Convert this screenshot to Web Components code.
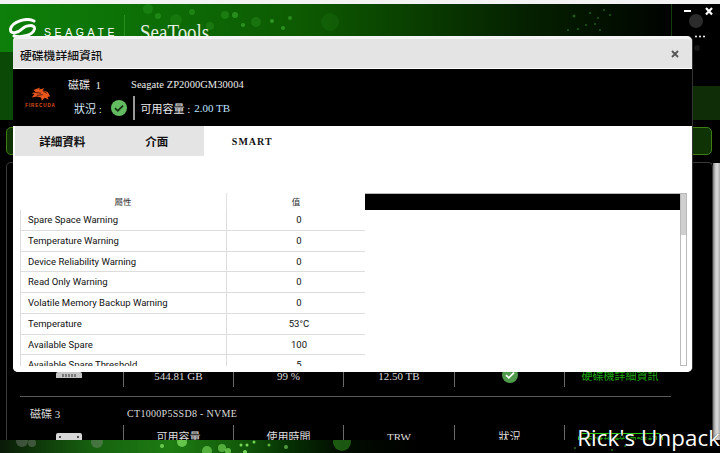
<!DOCTYPE html>
<html lang="zh-Hant"><head><meta charset="utf-8"><title>SeaTools</title>
<style>html,body{margin:0;padding:0;background:#000;overflow:hidden}</style></head>
<body>
<st-app>
  <st-modal slot="overlay" title-text="硬碟機詳細資訊">
    <st-drive-info></st-drive-info>
    <st-tabs></st-tabs>
    <st-smart>
      <st-row name="Spare Space Warning" value="0"></st-row>
      <st-row name="Temperature Warning" value="0"></st-row>
      <st-row name="Device Reliability Warning" value="0"></st-row>
      <st-row name="Read Only Warning" value="0"></st-row>
      <st-row name="Volatile Memory Backup Warning" value="0"></st-row>
      <st-row name="Temperature" value="53°C"></st-row>
      <st-row name="Available Spare" value="100"></st-row>
      <st-row name="Available Spare Threshold" value="5"></st-row>
    </st-smart>
  </st-modal>
  <st-disk v1="544.81 GB" v2="99 %" v3="12.50 TB" ok link="硬碟機詳細資訊"></st-disk>
  <st-disk title-text="磁碟 3" model="CT1000P5SSD8 - NVME" l1="可用容量" l2="使用時間" l3="TRW" l4="狀況" button="硬碟機詳細資訊" light></st-disk>
</st-app>
<script>
const CJK='"Liberation Serif","Noto Sans CJK TC",serif';
const SANS='Roboto,"Noto Sans CJK TC",sans-serif';
const def=(n,html)=>{customElements.define(n,class extends HTMLElement{
  constructor(){super();this.attachShadow({mode:'open'});}
  connectedCallback(){this.shadowRoot.innerHTML=typeof html==='function'?html(this):html;}
});};
const esc=s=>s==null?'':s;

def('st-header',`<style>
:host{display:flex;height:48px;align-items:flex-start;position:relative;overflow:hidden;
background:linear-gradient(90deg,#0e7f0a 0,#0c7206 120px,#0d5a02 300px,#0a4200 400px,#052200 520px,#020e00 620px,#000 680px)}
svg.bk{position:absolute;left:0;top:0}
.logo{position:relative;margin:14px 0 0 8px;flex:none}
.brand{position:relative;font:10.5px "Liberation Sans",sans-serif;letter-spacing:3.6px;color:#fff;margin:22px 0 0 7px;flex:none;width:72px;line-height:13px}
.sep{position:relative;width:1px;height:32px;background:#2c8d1f;margin:11px 15px 0 8px;flex:none}
.name{position:relative;font:24px/30px "Liberation Serif",serif;color:#e4f0df;margin-top:13px;flex:none;transform:scaleX(.79);transform-origin:0 0}
</style>
<svg class="bk" width="720" height="48" viewBox="0 4 720 48">
<g fill="#49c43a"><circle cx="148" cy="9" r="5" opacity=".2"/><circle cx="158" cy="16" r="3" opacity=".3"/><circle cx="176" cy="20" r="6" opacity=".15"/>
<circle cx="192" cy="12" r="3" opacity=".3"/><circle cx="210" cy="26" r="4" opacity=".2"/><circle cx="225" cy="15" r="4" opacity=".25"/><circle cx="235" cy="15" r="3" opacity=".45"/>
<circle cx="243" cy="25" r="2" opacity=".5"/><circle cx="256" cy="22" r="5" opacity=".2"/><circle cx="272" cy="21" r="2" opacity=".55"/><circle cx="290" cy="18" r="2" opacity=".45"/><circle cx="283" cy="28" r="2" opacity=".5"/><circle cx="330" cy="22" r="9" opacity=".1"/>
<g opacity=".4"><circle cx="574" cy="16" r="1.5"/><circle cx="590" cy="13" r="1"/><circle cx="598" cy="18" r="1"/><circle cx="604" cy="10" r="1"/><circle cx="586" cy="25" r="1"/><circle cx="595" cy="24" r="1"/><circle cx="578" cy="29" r="1"/><circle cx="610" cy="15" r="1"/><circle cx="568" cy="30" r="1"/><circle cx="600" cy="30" r="1"/></g></g>
<g fill="#aaa"><circle cx="696" cy="21" r="7" opacity=".25"/><circle cx="697" cy="48" r="3" opacity=".12"/></g>
<rect x="671" y="4" width="1" height="48" fill="#133d0c"/>
<rect x="684" y="10" width="7" height="2" fill="#fff"/>
<path d="M706 8l6 6.500M712 8l-6 6.500" stroke="#fff" stroke-width="2.200" fill="none"/>
<g fill="#fff"><circle cx="696" cy="36.500" r="1"/><circle cx="700" cy="36.500" r="1"/><circle cx="704" cy="36.500" r="1"/></g>
</svg>
<svg class="logo" width="29" height="22" viewBox="0 0 29 22" fill="none" stroke="#fff" stroke-width="3" stroke-linecap="round"><path d="M26 3C18-1 4 4 2.500 11 2 17 10 15 14 11 18 7 27 6 26.500 11 25 17 14 20 6 18"/></svg>
<div class="brand">SEAGATE</div><div class="sep"></div><div class="name">SeaTools</div>`);

def('st-hero',`<style>
:host{display:flex;flex-direction:column;justify-content:flex-end;align-items:flex-end;height:68px;
background:linear-gradient(90deg,#0a4a06 0,#0a3c04 300px,#000 340px)}
.stat{width:28px;height:34px;background:#0f2d06}
</style><div class="stat"></div>`);

def('st-banner',`<style>
:host{display:block;height:28px;margin:7px 8px 7px 6px;box-sizing:border-box;background:#0f3304;border:1px solid #3e7d10;border-radius:5px}
</style>`);

def('st-metric',h=>`<style>
:host{display:flex;flex-direction:column;align-items:center;box-sizing:border-box;height:41px;border-left:1px solid #6a6a6a;color:#dcdcdc;font:11px/18px ${CJK};padding-top:3px;overflow:visible}
div{height:18px;white-space:nowrap;text-align:center}
</style><div>${esc(h.getAttribute('label'))}</div><div><slot></slot></div>`);

def('st-disk',h=>{const a=n=>h.getAttribute(n);const L=h.hasAttribute('light');
 const icon=L?`<path d="M1 9a2 2 0 0 1 2-2h22a2 2 0 0 1 2 2v7H1z" fill="#d8d8d8"/><circle cx="5" cy="11" r="1" fill="#222"/><circle cx="23" cy="11" r="1" fill="#222"/>`:`<path d="M1 4a2 2 0 0 1 2-2h22a2 2 0 0 1 2 2v4H1z" fill="#c4c4c4"/><path d="M8 4v3M11 4v3M14 4v3M17 4v3M20 4v3" stroke="#333"/>`;
 return `<style>
:host{display:block;height:78px;border-bottom:1px solid #585858;margin:0 41px 0 13px;font:11px ${CJK};color:#dcdcdc;position:relative}
.t{display:flex;height:28px;align-items:center;padding-top:4px;box-sizing:border-box;white-space:nowrap}
.t b{font-weight:400;width:107px;padding-left:10px;box-sizing:border-box;font-size:11px}
.t i{font-style:normal;font-size:10px;letter-spacing:.3px}
.m{display:grid;grid-template-columns:103px 110px 110px 111px 110px 1fr;height:41px}
.ic{display:flex;justify-content:center;padding-right:6px}
.ic svg{margin:${L?'1px':'24px'} 0 0 0}
.c{display:flex;justify-content:center;align-items:flex-start;border-left:1px solid #6a6a6a;padding:${a('link')?'21px 0 0 4px':'0 0 0 4px'};box-sizing:border-box}
.lk{color:#1fa80f;font-size:11px;line-height:19px;white-space:nowrap}
.bt{margin-top:8px;width:85px;height:20px;box-sizing:border-box;border:1px solid #28d010;border-radius:5px;color:#1fa80f;font-size:11px;text-align:center;line-height:17px;white-space:nowrap}
</style>
<div class="t"><b>${esc(a('title-text'))}</b><i>${esc(a('model'))}</i></div>
<div class="m"><div class="ic"><svg width="28" height="16" viewBox="0 0 28 16">${icon}</svg></div>
<st-metric label="${esc(a('l1'))}">${esc(a('v1'))}</st-metric>
<st-metric label="${esc(a('l2'))}">${esc(a('v2'))}</st-metric>
<st-metric label="${esc(a('l3'))}">${esc(a('v3'))}</st-metric>
<st-metric label="${esc(a('l4'))}">${h.hasAttribute('ok')?'<st-check dim></st-check>':''}</st-metric>
<div class="c">${a('link')?`<span class="lk">${a('link')}</span>`:''}${a('button')?`<div class="bt">${a('button')}</div>`:''}</div></div>`});

def('st-check',h=>{const d=h.hasAttribute('dim');return `<style>:host{display:inline-flex;line-height:0}</style>
<svg width="16" height="16" viewBox="0 0 16 16"><circle cx="8" cy="8" r="8" fill="${d?'#4f9a4b':'#62bb60'}"/><path d="M4 8.200l2.800 2.600L12 5.600" fill="none" stroke="${d?'#fff':'#123312'}" stroke-width="1.800"/></svg>`});

def('st-band',`<style>:host{display:block;height:13px;line-height:0;overflow:hidden;background:linear-gradient(90deg,#0a1a08 0,#0c2a08 20px,#16600f 90px,#1d7c12 170px,#125a0a 240px,#053003 290px,#020d00 340px,#000 420px)}</style>
<svg width="720" height="13" viewBox="0 440 720 13">
<g fill="#9a9a9a" opacity=".35"><circle cx="22" cy="441" r="6"/><circle cx="32" cy="443" r="4"/><circle cx="97" cy="442" r="6"/></g>
<g fill="#7de05e"><circle cx="182" cy="442" r="5" opacity=".75"/><circle cx="162" cy="446" r="2" opacity=".8"/><circle cx="207" cy="451" r="5" opacity=".6"/><circle cx="222" cy="448" r="4" opacity=".6"/><circle cx="228" cy="451" r="3" opacity=".7"/><circle cx="241" cy="445" r="1.500" opacity=".95"/><circle cx="247" cy="445" r="1.500" opacity=".95"/><circle cx="254" cy="442" r="1.500" opacity=".9"/><circle cx="269" cy="445" r="1.500" opacity=".7"/><circle cx="245" cy="452" r="2" opacity=".95"/><circle cx="286" cy="447" r="2" opacity=".6"/></g>
<circle cx="342" cy="442" r="9" fill="#2e8a1c" opacity=".6"/>
<g fill="#3da030" opacity=".7"><circle cx="575" cy="448" r="1"/><circle cx="590" cy="444" r="1"/><circle cx="612" cy="450" r="1"/><circle cx="625" cy="446" r="1"/></g>
</svg>`);

def('st-app',`<style>
:host{display:flex;flex-direction:column;width:720px;height:453px;position:relative;overflow:hidden;background:#000}
.strip{height:4px;background:#f3f3f3;flex:none}
.main{flex:1;min-height:0;display:grid;grid-template-columns:1fr 7px;overflow:hidden}
.card{margin-left:6px;border:1px solid #3a3a3a;border-bottom:0;border-radius:5px 5px 0 0;padding-top:155px;overflow:hidden;box-sizing:border-box}
.sb{background:linear-gradient(90deg,#777 0,#bbb 2px,#ddd 4px,#aaa 7px);margin-top:1px}
.mark{position:absolute;right:0;top:423px;font:22.300px/30px "Open Sans",sans-serif;color:#fff;letter-spacing:.1px;white-space:nowrap;text-shadow:0 0 1px #000}
</style>
<div class="strip"></div><st-header></st-header><st-hero></st-hero><st-banner></st-banner>
<div class="main"><div class="card"><slot></slot></div><div class="sb"></div></div>
<st-band></st-band>
<slot name="overlay"></slot>
<div class="mark">Rick's Unpack</div>`);

def('st-modal',h=>`<style>
:host{position:absolute;left:13px;top:36px;width:679px;height:336px;display:flex;flex-direction:column;background:#fff;border-radius:5px;overflow:hidden;border-top:3px solid #f4f4f4;box-sizing:border-box;box-shadow:1px 0 0 #333}
.bar{height:30px;flex:none;background:#e4e4e4;border-bottom:1px solid #fff;box-sizing:border-box;display:flex;align-items:center;justify-content:space-between;padding:0 13px 0 7px;font:500 11.800px ${CJK};color:#111}
.bar span{padding-top:2px}
svg{display:block}
</style><div class="bar"><span>${h.getAttribute('title-text')}</span><svg width="8" height="8" viewBox="0 0 8 8"><path d="M1 1l6 6M7 1L1 7" stroke="#555" stroke-width="1.800"/></svg></div><slot></slot>`);

def('st-drive-info',`<style>
:host{display:flex;flex:none;height:57px;background:#000;font:11px ${CJK};color:#e8e8e8;align-items:flex-start}
.lg{width:55px;flex:none;display:flex;flex-direction:column;align-items:center;padding-top:18px;box-sizing:border-box}
.lg svg{margin-bottom:1px}
.lg span{font:bold 4.500px/6px "Liberation Sans",sans-serif;letter-spacing:.9px;color:#e2541c;white-space:nowrap}
.col{display:flex;flex-direction:column}
.a{display:flex;height:30px;align-items:center;box-sizing:border-box}
.a b{font-weight:400;width:63px;flex:none;white-space:pre}
.a i{font-style:normal;font-size:10.500px;letter-spacing:.05px;color:#eee}
.b{display:flex;align-items:center;height:24px;padding-left:6px;margin-top:-3px}
.s{color:#cfe0f0;width:37px;flex:none;white-space:pre}
.d{width:1.500px;height:24px;background:#9a9a9a;margin:0 6px}
.v{color:#bfe3ff;margin-left:4px}
</style>
<div class="lg"><svg width="20" height="15" viewBox="0 0 24 17"><path d="M3 3l8-3-1.500 2.500L16 1l-2 2.500 6 2 3 5-3 1 1 3-4.500-2-3.500 3.500-1-4-5-1L1 12l3-4-3.500-1 5-1.500z" fill="#e8561c"/><path d="M4 6l8 .8M7 9.500l7-.8M14 4l5 3" stroke="#000" stroke-width=".8" fill="none"/></svg><span>FIRECUDA</span></div>
<div class="col"><div class="a"><b>磁碟  1</b><i>Seagate ZP2000GM30004</i></div>
<div class="b"><span class="s">狀況 :</span><st-check></st-check><span class="d"></span><span>可用容量 :</span><span class="v">2.00 TB</span></div></div>`);

def('st-tabs',`<style>
:host{display:flex;flex:none;height:30px;background:#fff;padding-left:2px;font:bold 11.500px ${CJK};color:#111}
div{width:94.500px;display:flex;align-items:center;justify-content:center;background:#e4e4e4;box-sizing:border-box}
.on{background:#fff;font:bold 10px "Liberation Serif",serif;letter-spacing:1px;color:#111;padding-left:2px}
</style><div>詳細資料</div><div>介面</div><div class="on">SMART</div>`);

def('st-smart',`<style>
:host{flex:1;min-height:0;display:flex;align-items:stretch;padding:37px 5px 6px 7px;overflow:hidden;background:#fff}
.tb{width:345px;flex:none;overflow:hidden}
.hd{display:grid;grid-template-columns:206px 139px;height:17px;font:8.500px/17px "Noto Sans CJK TC",sans-serif;color:#333;text-align:center}
.hd div+div{border-left:1px solid #e2e2e2;box-sizing:border-box}
.pn{flex:1;min-width:0}
.pn div{height:16px;background:#000;border-top:1px solid #bbb}
.sc{width:7px;flex:none;border:1px solid #bbb;box-sizing:border-box}
.sc div{height:41px;background:#cfcfcf}
</style><div class="tb"><div class="hd"><div>屬性</div><div>值</div></div><slot></slot></div>
<div class="pn"><div></div></div><div class="sc"><div></div></div>`);

def('st-row',h=>`<style>
:host{display:grid;grid-template-columns:205px 139px;height:20.750px;box-sizing:border-box;border-bottom:1px solid #ddd;border-left:1px solid #ddd;font:9.500px/19.500px ${SANS};color:#111;white-space:nowrap}
.n{padding-left:7px;overflow:hidden}
.v{text-align:center;border-left:1px solid #ddd;padding-left:6px}
</style><div class="n">${h.getAttribute('name')}</div><div class="v">${h.getAttribute('value')}</div>`);
</script>
</body></html>
